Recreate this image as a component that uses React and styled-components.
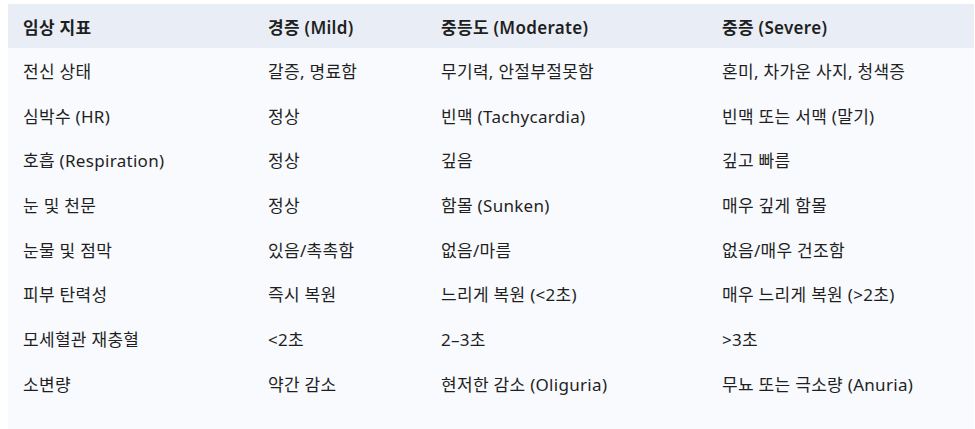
import React from "react";
import styled, { createGlobalStyle } from "styled-components";

const GlobalStyle = createGlobalStyle`
  html, body {
    margin: 0;
    padding: 0;
    background: #ffffff;
  }
  body {
    font-family: "Noto Sans", "Noto Sans CJK KR", sans-serif;
    color: #1f1f1f;
  }
`;

const Page = styled.div`
  padding: 4px 1px 0 8px;
  height: 429px;
  box-sizing: border-box;
  overflow: hidden;
`;

const Panel = styled.div`
  background: #f8fafd;
  height: 100%;
`;

const Table = styled.table`
  width: 100%;
  border-collapse: collapse;
  table-layout: fixed;
  font-size: 17px;
  letter-spacing: 0.3px;
`;

const HeadRow = styled.tr`
  background: #e9eef6;
  height: 44px;
`;

const Row = styled.tr`
  height: 44.7px;
`;

const HeadCell = styled.th`
  text-align: left;
  font-weight: 600;
  padding: 0 0 0 15px;
  color: #1f1f1f;
  white-space: nowrap;
`;

const Cell = styled.td`
  padding: 0 0 0 15px;
  color: #1f1f1f;
  white-space: nowrap;
`;

const columns = [
  { label: "임상 지표", width: 245 },
  { label: "경증 (Mild)", width: 173 },
  { label: "중등도 (Moderate)", width: 281 },
  { label: "중증 (Severe)" },
];

const rows = [
  ["전신 상태", "갈증, 명료함", "무기력, 안절부절못함", "혼미, 차가운 사지, 청색증"],
  ["심박수 (HR)", "정상", "빈맥 (Tachycardia)", "빈맥 또는 서맥 (말기)"],
  ["호흡 (Respiration)", "정상", "깊음", "깊고 빠름"],
  ["눈 및 천문", "정상", "함몰 (Sunken)", "매우 깊게 함몰"],
  ["눈물 및 점막", "있음/촉촉함", "없음/마름", "없음/매우 건조함"],
  ["피부 탄력성", "즉시 복원", "느리게 복원 (<2초)", "매우 느리게 복원 (>2초)"],
  ["모세혈관 재충혈", "<2초", "2–3초", ">3초"],
  ["소변량", "약간 감소", "현저한 감소 (Oliguria)", "무뇨 또는 극소량 (Anuria)"],
];

export default function App() {
  return (
    <>
      <GlobalStyle />
      <Page>
        <Panel>
          <Table>
            <colgroup>
              {columns.map((c) => (
                <col key={c.label} style={c.width ? { width: c.width } : undefined} />
              ))}
            </colgroup>
            <thead>
              <HeadRow>
                {columns.map((c) => (
                  <HeadCell key={c.label}>{c.label}</HeadCell>
                ))}
              </HeadRow>
            </thead>
            <tbody>
              {rows.map((r) => (
                <Row key={r[0]}>
                  {r.map((text, i) => (
                    <Cell key={i}>{text}</Cell>
                  ))}
                </Row>
              ))}
            </tbody>
          </Table>
        </Panel>
      </Page>
    </>
  );
}
